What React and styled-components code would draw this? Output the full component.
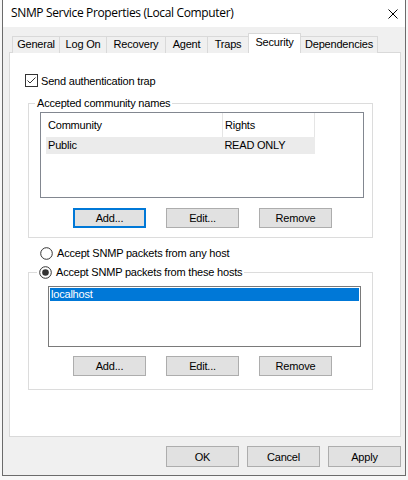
import React from 'react'
import styled, { createGlobalStyle } from 'styled-components'

const GlobalStyle = createGlobalStyle`
html, body {
    margin: 0;
    padding: 0;
    background: #f7f7f7;
}
body {
    font-family: 'Liberation Sans', Arial, sans-serif;
    font-size: 11px;
    color: #000;
}
`

const Window = styled.div`
box-sizing: border-box;
margin-left: 2px;
width: 404px;
height: 476px;
background: #f0f0f0;
border: 1px solid #6b6b6b;
border-top: none;
display: flex;
flex-direction: column;
`

const TitleBar = styled.div`
height: 27px;
background: #fff;
display: flex;
align-items: center;
justify-content: space-between;
padding: 0 7px 3px 8px;
box-sizing: border-box;
font-family: 'Segoe UI', 'Open Sans', sans-serif;
font-size: 12px;
letter-spacing: -0.35px;
color: #000;
`

const CloseButton = styled.svg`
width: 10px;
height: 10px;
margin-top: 3px;
`

const Body = styled.div`
padding: 6px 4px 0 6px;
display: flex;
flex-direction: column;
`

const TabRow = styled.div`
display: flex;
align-items: flex-end;
height: 20px;
padding-left: 3px;
margin-bottom: -1px;
`

const Tab = styled.div`
box-sizing: border-box;
width: ${p => p.$w}px;
height: ${p => (p.$active ? 20 : 17)}px;
border: 1px solid #d9d9d9;
border-bottom: none;
margin-left: ${p => (p.$first ? 0 : -1)}px;
background: ${p => (p.$active ? '#fff' : '#f0f0f0')};
text-align: center;
line-height: ${p => (p.$active ? 16 : 15)}px;
letter-spacing: -0.2px;
position: ${p => (p.$active ? 'relative' : 'static')};
z-index: ${p => (p.$active ? 1 : 0)};
`

const Panel = styled.div`
box-sizing: border-box;
height: 385px;
background: #fff;
border: 1px solid #d9d9d9;
padding: 21px 0 0 15px;
display: flex;
flex-direction: column;
letter-spacing: -0.2px;
`

const CheckRow = styled.label`
display: flex;
align-items: center;
gap: 3px;
height: 13px;
`

const Group = styled.fieldset`
box-sizing: border-box;
width: 345px;
margin: ${p => p.$top}px 0 0 3px;
padding: 0;
border: 1px solid #dcdcdc;
min-width: 0;
`

const Legend = styled.legend`
margin-left: ${p => p.$ml || 6}px;
padding: 0 2px;
line-height: 14px;
`

const GroupBody = styled.div`
padding: 0 8px ${p => p.$bottom}px ${p => p.$left}px;
`

const ListView = styled.div`
box-sizing: border-box;
margin-top: 2px;
height: 86px;
border: 1px solid #828790;
padding-left: 5px;
`

const HeaderRow = styled.div`
display: flex;
height: 24px;
`

const HeaderCell = styled.div`
box-sizing: border-box;
width: ${p => p.$w}px;
padding-left: 2px;
line-height: 24px;
border-right: 1px solid #e5e5e5;
`

const DataRow = styled.div`
display: flex;
height: 17px;
width: 269px;
background: #ebebeb;
`

const DataCell = styled.div`
width: ${p => p.$w}px;
padding-left: 2px;
line-height: 17px;
`

const ListBox = styled.div`
box-sizing: border-box;
margin: ${p => p.$top}px 0 0;
width: 313px;
height: 61px;
border: 1px solid #7a7a7a;
padding: 1px;
`

const ListItem = styled.div`
height: 13px;
line-height: 13px;
padding-left: 1px;
background: ${p => (p.$selected ? '#0078d7' : 'transparent')};
color: ${p => (p.$selected ? '#fff' : '#000')};
`

const ButtonRow = styled.div`
display: flex;
gap: 20px;
margin-top: ${p => p.$top}px;
padding-left: ${p => p.$left}px;
`

const Button = styled.button`
box-sizing: border-box;
width: 73px;
height: ${p => p.$h || 20}px;
padding: 0;
background: #e1e1e1;
border: 1px solid ${p => (p.$focus ? '#0078d7' : '#adadad')};
box-shadow: ${p => (p.$focus ? 'inset 0 0 0 1px #0078d7' : 'none')};
font-family: 'Liberation Sans', Arial, sans-serif;
font-size: 11px;
letter-spacing: -0.2px;
color: #000;
`

const RadioRow = styled.label`
display: flex;
align-items: center;
gap: 4px;
height: 14px;
margin: ${p => p.$m || '0'};
`

const Footer = styled.div`
display: flex;
justify-content: flex-end;
gap: 8px;
margin-top: 9px;
`

const CheckBox = () => (
    <svg width='13' height='13' viewBox='0 0 13 13'>
        <rect x='0.5' y='0.5' width='12' height='12' fill='#fff' stroke='#333' />
        <path d='M2.5 6.5 L5 9 L10.5 3.5' fill='none' stroke='#333' strokeWidth='1' />
    </svg>
)

const Radio = ({ checked }) => (
    <svg width='13' height='13' viewBox='0 0 13 13'>
        <circle cx='6.5' cy='6.5' r='5.8' fill='#fff' stroke='#333' />
        {checked && <circle cx='6.5' cy='6.5' r='3.3' fill='#333' />}
    </svg>
)

const tabs = [
    { name: 'General', w: 48 },
    { name: 'Log On', w: 48 },
    { name: 'Recovery', w: 60 },
    { name: 'Agent', w: 43 },
    { name: 'Traps', w: 42 },
    { name: 'Security', w: 53, active: true },
    { name: 'Dependencies', w: 78 },
]

export default function App() {
    return (
        <>
            <GlobalStyle />
            <Window>
                <TitleBar>
                    <span>SNMP Service Properties (Local Computer)</span>
                    <CloseButton viewBox='0 0 10 10'>
                        <path d='M0.5 0.5 L9.5 9.5 M9.5 0.5 L0.5 9.5' stroke='#000' strokeWidth='1' />
                    </CloseButton>
                </TitleBar>
                <Body>
                    <TabRow>
                        {tabs.map((t, i) => (
                            <Tab key={t.name} $w={t.w} $active={t.active} $first={i === 0}>{t.name}</Tab>
                        ))}
                    </TabRow>
                    <Panel>
                        <CheckRow>
                            <CheckBox />
                            <span>Send authentication trap</span>
                        </CheckRow>
                        <Group $top={9}>
                            <Legend>Accepted community names</Legend>
                            <GroupBody $left={11} $bottom={9}>
                                <ListView>
                                    <HeaderRow>
                                        <HeaderCell $w={177}>Community</HeaderCell>
                                        <HeaderCell $w={92}>Rights</HeaderCell>
                                    </HeaderRow>
                                    <DataRow>
                                        <DataCell $w={177}>Public</DataCell>
                                        <DataCell $w={92}>READ ONLY</DataCell>
                                    </DataRow>
                                </ListView>
                                <ButtonRow $top={10} $left={33}>
                                    <Button $focus>Add...</Button>
                                    <Button>Edit...</Button>
                                    <Button>Remove</Button>
                                </ButtonRow>
                            </GroupBody>
                        </Group>
                        <RadioRow $m='8px 0 0 15px'>
                            <Radio />
                            <span>Accept SNMP packets from any host</span>
                        </RadioRow>
                        <Group $top={5}>
                            <Legend $ml={8}>
                                <RadioRow>
                                    <Radio checked />
                                    <span>Accept SNMP packets from these hosts</span>
                                </RadioRow>
                            </Legend>
                            <GroupBody $left={19} $bottom={13}>
                                <ListBox $top={7}>
                                    <ListItem $selected>localhost</ListItem>
                                </ListBox>
                                <ButtonRow $top={9} $left={25}>
                                    <Button>Add...</Button>
                                    <Button>Edit...</Button>
                                    <Button>Remove</Button>
                                </ButtonRow>
                            </GroupBody>
                        </Group>
                    </Panel>
                    <Footer>
                        <Button $h={21}>OK</Button>
                        <Button $h={21}>Cancel</Button>
                        <Button $h={21}>Apply</Button>
                    </Footer>
                </Body>
            </Window>
        </>
    )
}
